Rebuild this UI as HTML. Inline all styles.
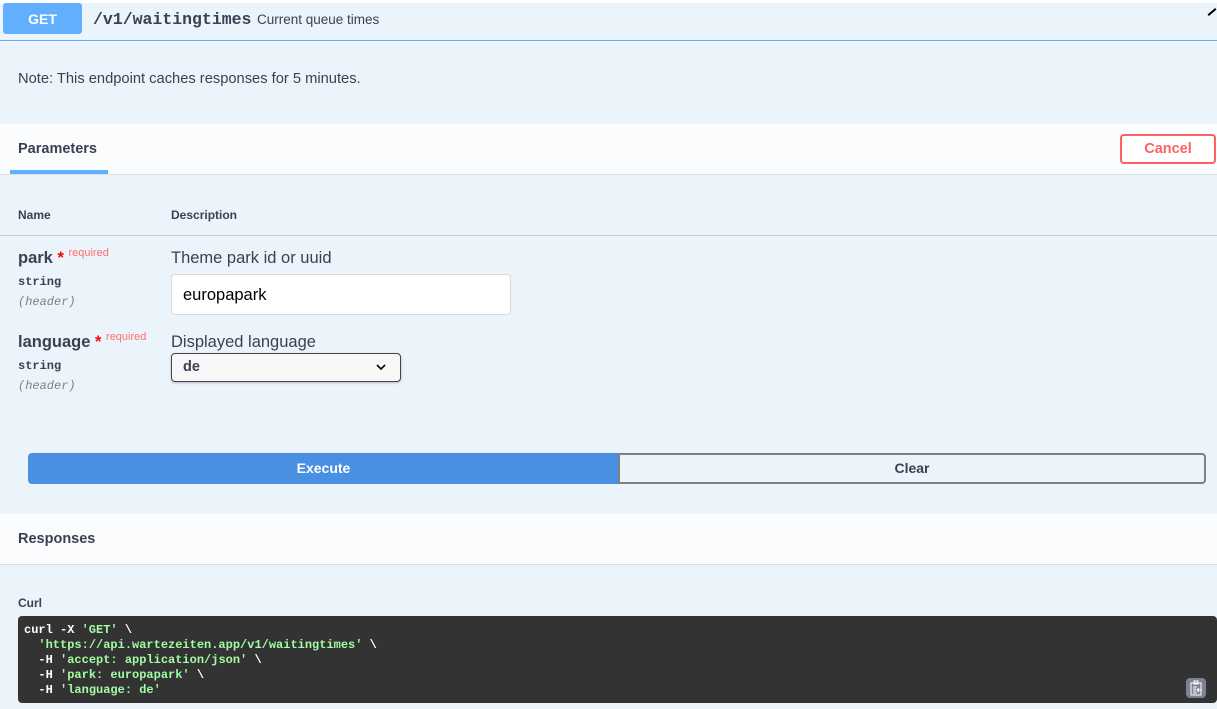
<!DOCTYPE html>
<html><head><meta charset="utf-8"><style>
*{box-sizing:border-box;margin:0;padding:0}
body{width:1217px;height:709px;overflow:hidden;background:#ebf3fb;font-family:"Liberation Sans",sans-serif;color:#3b4151;position:relative}
.a{position:absolute}
.mono{font-family:"Liberation Mono","DejaVu Sans Mono",monospace}
</style></head><body>
<div class="a" style="left:0;top:0;width:1217px;height:3px;background:#fff"></div>
<div class="a" style="left:0;top:40px;width:1217px;height:1px;background:#61affe"></div>
<div class="a" style="left:3px;top:3px;width:79px;height:31px;background:#61affe;border-radius:3px;color:#fff;font-weight:bold;font-size:14px;text-align:center;line-height:32px">GET</div>
<div class="a mono" style="left:93px;top:10px;font-size:16.5px;font-weight:bold;color:#3b4151">/v1/waitingtimes</div>
<div class="a" style="left:257px;top:12px;font-size:13.5px">Current queue times</div>
<div class="a" style="left:1207px;top:11px;width:10px;height:2px;background:#000;transform:rotate(-40deg)"></div>
<div class="a" style="left:18px;top:71px;font-size:14.7px">Note: This endpoint caches responses for 5 minutes.</div>
<div class="a" style="left:0;top:124px;width:1217px;height:51px;background:#fafcfe;border-bottom:1px solid #d8dde7"></div>
<div class="a" style="left:18px;top:141px;font-size:14.5px;font-weight:bold">Parameters</div>
<div class="a" style="left:10px;top:170px;width:98px;height:4px;background:#61affe"></div>
<div class="a" style="left:1120px;top:134px;width:96px;height:30px;border:2px solid #ff6060;border-radius:4px;color:#ff6060;font-weight:bold;font-size:14.5px;text-align:center;line-height:26px;background:#fff">Cancel</div>
<div class="a" style="left:18px;top:208px;font-size:12px;font-weight:bold">Name</div>
<div class="a" style="left:171px;top:208px;font-size:12px;font-weight:bold">Description</div>
<div class="a" style="left:0;top:235px;width:1217px;height:1px;background:#c5cad3"></div>
<div class="a" style="left:18px;top:249px;font-size:16.5px;font-weight:bold">park <span style="color:red">*</span> <span style="color:#ff6f6f;font-size:11px;font-weight:normal;position:relative;top:-7px">required</span></div>
<div class="a mono" style="left:18px;top:275px;font-size:12px;font-weight:bold">string</div>
<div class="a mono" style="left:18px;top:295px;font-size:12px;font-style:italic;color:#808080">(header)</div>
<div class="a" style="left:171px;top:249px;font-size:16.5px">Theme park id or uuid</div>
<div class="a" style="left:171px;top:274px;width:340px;height:41px;background:#fff;border:1px solid #d9d9d9;border-radius:4px;font-size:16.5px;padding-left:11px;line-height:41px;color:#000">europapark</div>
<div class="a" style="left:18px;top:333px;font-size:16.5px;font-weight:bold">language <span style="color:red">*</span> <span style="color:#ff6f6f;font-size:11px;font-weight:normal;position:relative;top:-7px">required</span></div>
<div class="a mono" style="left:18px;top:359px;font-size:12px;font-weight:bold">string</div>
<div class="a mono" style="left:18px;top:379px;font-size:12px;font-style:italic;color:#808080">(header)</div>
<div class="a" style="left:171px;top:333px;font-size:16.5px">Displayed language</div>
<div class="a" style="left:171px;top:353px;width:230px;height:29px;background:#f7f7f7;border:1px solid #41444e;border-radius:4px;box-shadow:0 1px 2px rgba(0,0,0,.25);font-size:14.5px;font-weight:bold;padding-left:11px;line-height:27px">de
<svg class="a" style="right:14px;top:10px" width="10" height="7" viewBox="0 0 10 7"><path d="M1 1l4 4 4-4" stroke="#000" stroke-width="1.6" fill="none"/></svg></div>
<div class="a" style="left:28px;top:453px;width:591px;height:31px;background:#4990e2;border-radius:4px 0 0 4px;color:#fff;font-weight:bold;font-size:14px;text-align:center;line-height:31px">Execute</div>
<div class="a" style="left:618px;top:453px;width:588px;height:31px;border:2px solid #808080;border-radius:0 4px 4px 0;font-weight:bold;font-size:14px;text-align:center;line-height:27px;color:#3b4151;background:#ebf3fb">Clear</div>
<div class="a" style="left:0;top:514px;width:1217px;height:51px;background:#fafcfe;border-bottom:1px solid #d8dde7"></div>
<div class="a" style="left:18px;top:531px;font-size:14.5px;font-weight:bold">Responses</div>
<div class="a" style="left:18px;top:596px;font-size:12px;font-weight:bold">Curl</div>
<div class="a mono" style="left:18px;top:616px;width:1199px;height:87px;background:#333;border-radius:4px;padding:7px 6px;font-size:12px;font-weight:bold;line-height:15px;color:#fff;white-space:pre">curl -X <span style="color:#a2fca2">'GET'</span> \
  <span style="color:#a2fca2">'https://api.wartezeiten.app/v1/waitingtimes'</span> \
  -H <span style="color:#a2fca2">'accept: application/json'</span> \
  -H <span style="color:#a2fca2">'park: europapark'</span> \
  -H <span style="color:#a2fca2">'language: de'</span></div>
<div class="a" style="left:1186px;top:678px;width:20px;height:20px;background:#7d8293;border-radius:4px"></div>
<svg class="a" style="left:1189px;top:680px" width="14" height="16" viewBox="0 0 14 16"><path d="M2 3h10v12H2z M5 1h4v3H5z M4 7h4 M4 9h3 M4 11h3 M4 13h4 M13 10H8 M10 8l-2 2 2 2" stroke="#fff" stroke-width="1" fill="none"/></svg>
</body></html>
